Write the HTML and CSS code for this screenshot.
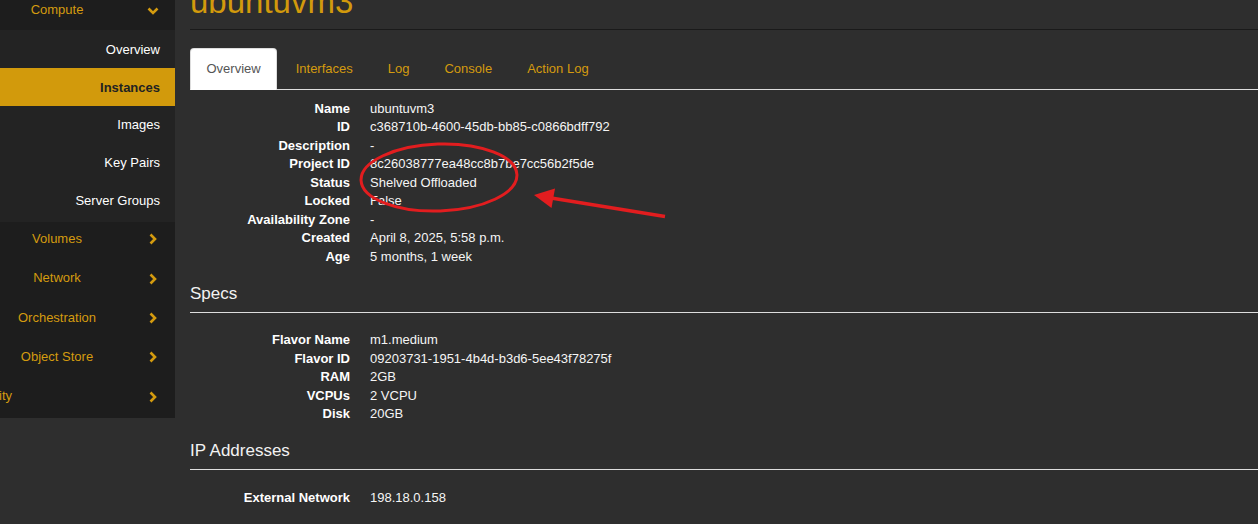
FILE: index.html
```html
<!DOCTYPE html>
<html lang="en">
<head>
<meta charset="utf-8">
<title>ubuntuvm3 - Instance Overview</title>
<link rel="stylesheet" href="styles.css">
</head>
<body>
<div class="layout">
  <nav class="sidebar">
    <div class="nav-cat nav-cat--open">
      <span class="nav-label">Compute</span>
      <svg class="chev chev--down" width="12" height="8" viewBox="0 0 12 8"><path d="M1.5 1.5 L6 6 L10.5 1.5" fill="none" stroke="#d49b0f" stroke-width="2.6"/></svg>
    </div>
    <ul class="subnav">
      <li class="subnav-item">Overview</li>
      <li class="subnav-item subnav-item--active">Instances</li>
      <li class="subnav-item">Images</li>
      <li class="subnav-item">Key Pairs</li>
      <li class="subnav-item">Server Groups</li>
    </ul>
    <div class="nav-cat">
      <span class="nav-label">Volumes</span>
      <svg class="chev" width="8" height="12" viewBox="0 0 8 12"><path d="M1.5 1.5 L6 6 L1.5 10.5" fill="none" stroke="#d49b0f" stroke-width="2.6"/></svg>
    </div>
    <div class="nav-cat">
      <span class="nav-label">Network</span>
      <svg class="chev" width="8" height="12" viewBox="0 0 8 12"><path d="M1.5 1.5 L6 6 L1.5 10.5" fill="none" stroke="#d49b0f" stroke-width="2.6"/></svg>
    </div>
    <div class="nav-cat">
      <span class="nav-label">Orchestration</span>
      <svg class="chev" width="8" height="12" viewBox="0 0 8 12"><path d="M1.5 1.5 L6 6 L1.5 10.5" fill="none" stroke="#d49b0f" stroke-width="2.6"/></svg>
    </div>
    <div class="nav-cat">
      <span class="nav-label">Object Store</span>
      <svg class="chev" width="8" height="12" viewBox="0 0 8 12"><path d="M1.5 1.5 L6 6 L1.5 10.5" fill="none" stroke="#d49b0f" stroke-width="2.6"/></svg>
    </div>
    <div class="nav-cat">
      <span class="nav-label nav-label--clipped"><span>Identity</span></span>
      <svg class="chev" width="8" height="12" viewBox="0 0 8 12"><path d="M1.5 1.5 L6 6 L1.5 10.5" fill="none" stroke="#d49b0f" stroke-width="2.6"/></svg>
    </div>
  </nav>

  <main class="main">
    <h1 class="page-title">ubuntuvm3</h1>
    <ul class="tabs">
      <li class="tab tab--active">Overview</li>
      <li class="tab">Interfaces</li>
      <li class="tab">Log</li>
      <li class="tab">Console</li>
      <li class="tab">Action Log</li>
    </ul>

    <dl class="details details--first">
      <dt>Name</dt><dd>ubuntuvm3</dd>
      <dt>ID</dt><dd>c368710b-4600-45db-bb85-c0866bdff792</dd>
      <dt>Description</dt><dd>-</dd>
      <dt>Project ID</dt><dd>8c26038777ea48cc8b7be7cc56b2f5de</dd>
      <dt>Status</dt><dd>Shelved Offloaded</dd>
      <dt>Locked</dt><dd>False</dd>
      <dt>Availability Zone</dt><dd>-</dd>
      <dt>Created</dt><dd>April 8, 2025, 5:58 p.m.</dd>
      <dt>Age</dt><dd>5 months, 1 week</dd>
    </dl>

    <h4 class="section-title">Specs</h4>
    <dl class="details details--specs">
      <dt>Flavor Name</dt><dd>m1.medium</dd>
      <dt>Flavor ID</dt><dd>09203731-1951-4b4d-b3d6-5ee43f78275f</dd>
      <dt>RAM</dt><dd>2GB</dd>
      <dt>VCPUs</dt><dd>2 VCPU</dd>
      <dt>Disk</dt><dd>20GB</dd>
    </dl>

    <h4 class="section-title">IP Addresses</h4>
    <dl class="details details--ip">
      <dt>External Network</dt><dd>198.18.0.158</dd>
    </dl>
  </main>
</div>

<svg class="annotation" width="1258" height="524" viewBox="0 0 1258 524">
  <ellipse cx="439" cy="177.5" rx="78" ry="33.5" transform="rotate(-2 439 177.5)" fill="none" stroke="#e21d1f" stroke-width="3"/>
  <line x1="665" y1="216.5" x2="548" y2="197.5" stroke="#e21d1f" stroke-width="3.6"/>
  <polygon points="534,195 555,188.5 551.5,208" fill="#e21d1f"/>
</svg>
</body>
</html>
```

FILE: styles.css
```css
html, body {
  margin: 0;
  padding: 0;
}

body {
  position: relative;
  width: 1258px;
  height: 524px;
  overflow: hidden;
  background: #2e2e2e;
  font-family: "Liberation Sans", Arial, Helvetica, sans-serif;
  font-size: 13px;
  line-height: 1.428571;
  color: #fff;
}

.layout {
  display: flex;
  align-items: flex-start;
}

/* Sidebar */
.sidebar {
  width: 175px;
  flex: 0 0 175px;
  margin-top: -9px;
  background: #1d1d1d;
  overflow: hidden;
}

.nav-cat {
  display: flex;
  align-items: center;
  padding: 8.4px 0 12.4px;
  color: #d49b0f;
}

.nav-cat--open {
  padding: 10.4px 0;
}

.nav-label {
  width: 114px;
  text-align: center;
  white-space: nowrap;
}

.nav-label--clipped {
  width: 12px;
  display: flex;
  justify-content: flex-end;
}

.chev {
  display: block;
  margin-left: auto;
  margin-right: 18px;
}

.chev--down {
  margin-right: 16px;
}

.subnav {
  list-style: none;
  margin: 0;
  padding: 0 0 2px;
  background: #232323;
}

.subnav-item {
  padding: 10.3px 15px 9px;
  text-align: right;
  color: #fff;
}

.subnav-item--active {
  background: #d29a0c;
  color: #222;
  font-weight: bold;
}

/* Main */
.main {
  flex: 1;
  min-width: 0;
  padding-left: 15px;
}

.page-title {
  margin: -16px 0 0;
  padding-bottom: 9px;
  border-bottom: 1px solid #1a1a1a;
  font-size: 33px;
  line-height: 36px;
  font-weight: normal;
  color: #d29a0c;
}

.tabs {
  display: flex;
  list-style: none;
  margin: 18px 0 0;
  padding: 0;
  border-bottom: 1px solid #dddddd;
}

.tab {
  margin: 0 2px -1px 0;
  padding: 10px 15.5px;
  line-height: 20px;
  border: 1px solid transparent;
  border-radius: 4px 4px 0 0;
  color: #d49b0f;
}

.tab--active {
  background: #fff;
  color: #555;
  border-color: #ddd #ddd transparent;
}

.details {
  display: grid;
  grid-template-columns: 160px 1fr;
  column-gap: 20px;
  margin: 0;
}

.details--first {
  margin-top: 9.5px;
}

.details--specs {
  margin-top: 18.5px;
}

.details--ip {
  margin-top: 19.5px;
}

.details dt {
  font-weight: bold;
  text-align: right;
  white-space: nowrap;
}

.details dd {
  margin: 0;
  color: #f5f5f5;
}

.section-title {
  margin: 17px 0 0;
  padding-bottom: 9px;
  border-bottom: 1px solid #dddddd;
  font-size: 17px;
  line-height: 19px;
  font-weight: normal;
  color: #f2f2f2;
}

/* Annotation overlay */
.annotation {
  position: absolute;
  left: 0;
  top: 0;
  pointer-events: none;
}
```
